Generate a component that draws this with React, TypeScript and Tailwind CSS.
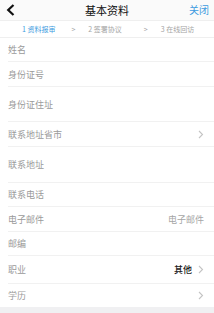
import React from 'react';

const font = { fontFamily: '"Noto Sans CJK SC", "Noto Sans", sans-serif' };

function Chevron() {
  return (
    <svg width="6" height="9" viewBox="0 0 6 9" fill="none" className="ml-[6px]">
      <path d="M1 1l3.5 3.5L1 8" stroke="#c4c4c4" strokeWidth="1.1" />
    </svg>
  );
}

type Row = { label: string; h: string; value?: string; valueDark?: boolean; arrow?: boolean };

const rows: Row[] = [
  { label: '姓名', h: 'h-[24px]' },
  { label: '身份证号', h: 'h-[25px]' },
  { label: '身份证住址', h: 'h-[35px]' },
  { label: '联系地址省市', h: 'h-[25px]', arrow: true },
  { label: '联系地址', h: 'h-[36px]' },
  { label: '联系电话', h: 'h-[24px]' },
  { label: '电子邮件', h: 'h-[25px]', value: '电子邮件' },
  { label: '邮编', h: 'h-[24px]' },
  { label: '职业', h: 'h-[28px]', value: '其他', valueDark: true, arrow: true },
  { label: '学历', h: 'h-[23px]', arrow: true },
];

export default function App() {
  return (
    <div className="w-[214px] h-[313px] bg-[#f0f0f2] overflow-hidden" style={font}>
      {/* nav bar */}
      <div className="h-[20px] bg-[#fafafa] flex items-center pl-[6px] pr-[5px]">
        <svg width="9" height="12" viewBox="0 0 9 12" fill="none">
          <path d="M7.5 1L2.2 6l5.3 5" stroke="#111" strokeWidth="2.2" />
        </svg>
        <div className="flex-1 text-center text-[11px] text-[#111] leading-none pl-[10px]">基本资料</div>
        <div className="text-[10px] text-[#3d9be0] leading-none">关闭</div>
      </div>

      {/* steps */}
      <div className="h-[18px] bg-white border-t border-b border-[#efefef] flex items-center text-[7px] leading-none text-[#a5a5a5]">
        <span className="ml-[22px] text-[#3d9be0]">1 资料报审</span>
        <span className="ml-[16px]">&gt;</span>
        <span className="ml-[13px]">2 签署协议</span>
        <span className="ml-[22px]">&gt;</span>
        <span className="ml-[13px]">3 在线回访</span>
      </div>

      {/* form */}
      <div className="bg-white pl-[8px]">
        {rows.map((r, i) => (
          <div key={r.label} className={`${r.h} flex items-center pr-[10px] ${i < rows.length - 1 ? 'border-b border-[#f1f1f1]' : ''}`}>
            <span className="text-[9px] text-[#9a9a9a] leading-none">{r.label}</span>
            <span className="flex-1" />
            {r.value && (
              <span className={`text-[9px] leading-none ${r.valueDark ? 'text-[#222] font-medium' : 'text-[#a5a5a5]'}`}>{r.value}</span>
            )}
            {r.arrow && <Chevron />}
          </div>
        ))}
      </div>
    </div>
  );
}
